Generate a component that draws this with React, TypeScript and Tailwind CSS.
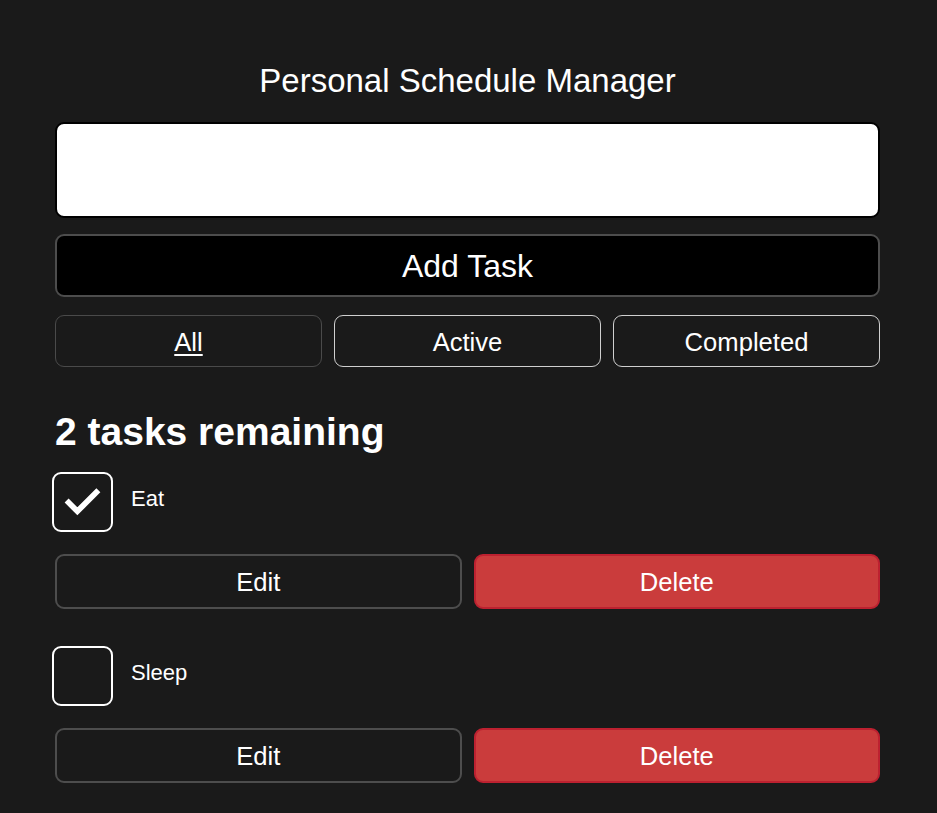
import { useState } from "react";

type Task = { id: number; name: string; done: boolean };

const initialTasks: Task[] = [
  { id: 1, name: "Eat", done: true },
  { id: 2, name: "Sleep", done: false },
];

const filters = ["All", "Active", "Completed"];

function CheckBox({ checked, onToggle }: { checked: boolean; onToggle: () => void }) {
  return (
    <button
      onClick={onToggle}
      className="-ml-[3px] w-[61px] h-[60px] shrink-0 rounded-[9px] border-2 border-white flex items-center justify-center"
    >
      {checked && (
        <svg width="61" height="60" viewBox="0 0 61 60">
          <polyline
            points="13.5,28.5 25,40 47.5,17.5"
            fill="none"
            stroke="white"
            strokeWidth="6"
            strokeLinecap="butt"
            strokeLinejoin="miter"
          />
        </svg>
      )}
    </button>
  );
}

export default function App() {
  const [tasks, setTasks] = useState<Task[]>(initialTasks);
  const [filter, setFilter] = useState("All");

  // the counter in this app counts every task in the list
  const remaining = tasks.length;

  return (
    <div className="min-h-screen bg-[#1a1a1a] text-white font-['Liberation_Sans',Arial,sans-serif]">
      <div className="w-[825px] ml-[55px] pt-[62px] pb-[40px]">
        {/* TITLE */}
        <h1 className="text-center text-[33px] leading-[38px] font-normal">
          Personal Schedule Manager
        </h1>

        {/* FORM */}
        <input
          type="text"
          className="mt-[22px] block w-full h-[96px] bg-white border-2 border-black rounded-[9px] text-black text-[24px] px-5 outline-none"
        />
        <button className="mt-[16px] w-full h-[63px] bg-black border-2 border-[#4d4d4d] rounded-[9px] text-[32px] leading-none pt-[1px]">
          Add Task
        </button>

        {/* FILTERS */}
        <div className="mt-[18px] grid grid-cols-3 gap-3">
          {filters.map((f) => (
            <button
              key={f}
              onClick={() => setFilter(f)}
              className={
                f === filter
                  ? "h-[52px] pt-[4px] rounded-[9px] border border-[#4a4a4a] text-[25.6px] leading-none underline underline-offset-[3px] decoration-2"
                  : "h-[52px] pt-[4px] rounded-[9px] border border-[#cfcfcf] text-[25.6px] leading-none"
              }
            >
              {f}
            </button>
          ))}
        </div>

        {/* HEADING */}
        <h2 className="mt-[43px] text-[39px] leading-[44px] font-bold">
          {remaining} tasks remaining
        </h2>

        {/* LIST */}
        <ul className="mt-[18px] flex flex-col gap-[37px]">
          {tasks.map((task) => (
            <li key={task.id}>
              <div className="flex items-start gap-[18px]">
                <CheckBox
                  checked={task.done}
                  onToggle={() =>
                    setTasks(tasks.map((t) => (t.id === task.id ? { ...t, done: !t.done } : t)))
                  }
                />
                <span className="mt-[14px] text-[22px] leading-[25px]">{task.name}</span>
              </div>
              <div className="mt-[22px] grid grid-cols-2 gap-3">
                <button className="h-[55px] pt-[2px] rounded-[9px] border-2 border-[#4d4d4d] text-[25.6px] leading-none">
                  Edit
                </button>
                <button
                  onClick={() => setTasks(tasks.filter((t) => t.id !== task.id))}
                  className="h-[55px] pt-[2px] rounded-[9px] border-2 border-[#bd2130] bg-[#ca3c3c] text-[25.6px] leading-none"
                >
                  Delete
                </button>
              </div>
            </li>
          ))}
        </ul>
      </div>
    </div>
  );
}
